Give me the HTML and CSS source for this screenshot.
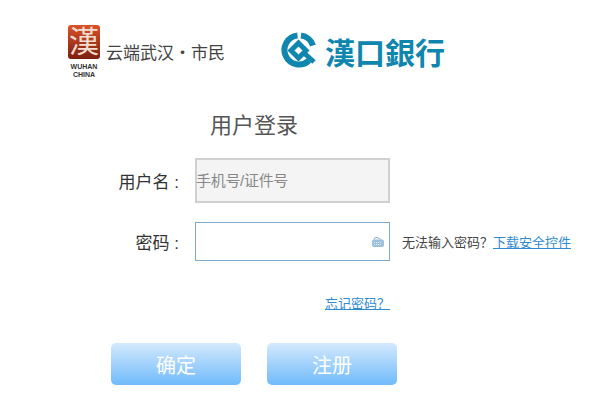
FILE: index.html
```html
<!DOCTYPE html>
<html lang="zh-CN">
<head>
    <meta charset="UTF-8">
    <title>用户登录</title>
    <link rel="stylesheet" href="styles.css">
</head>
<body>
    <header class="header">
        <div class="city-logo">
            <div class="seal-box">
                <div class="seal">漢</div>
                <div class="seal-en">WUHAN<br>CHINA</div>
            </div>
            <div class="city-name">云端武汉・市民</div>
        </div>
        <div class="bank-logo">
            <svg class="bank-icon" width="36" height="36" viewBox="0 0 36 36">
                <path d="M16.5 3.6A14.5 14.5 0 1 0 28 28.5" fill="none" stroke="#0f86ad" stroke-width="6"/>
                <path d="M20 3.6A14.5 14.5 0 0 1 32 13.5" fill="none" stroke="#0f86ad" stroke-width="6"/>
                <path d="M17.5 11L25 18.5L17.5 26L10 18.5Z" fill="none" stroke="#0f86ad" stroke-width="5"/>
                <path d="M23 21L33 30" fill="none" stroke="#0f86ad" stroke-width="5"/>
            </svg>
            <div class="bank-name">漢口銀行</div>
        </div>
    </header>

    <h1 class="title">用户登录</h1>

    <form class="login-form">
        <div class="form-row">
            <label class="form-label">用户名 :</label>
            <div class="input user-input">手机号/证件号</div>
        </div>
        <div class="form-row pwd-row">
            <label class="form-label">密码 :</label>
            <div class="input pwd-input">
                <svg width="14" height="12" viewBox="0 0 14 12">
                    <path d="M3 3.5Q3 1 6 1.5L10 3.5" fill="none" stroke="#8fb4cf" stroke-width="1"/>
                    <rect x="1" y="3.5" width="12" height="7.5" rx="2" fill="#9cc0dc"/>
                    <path d="M3 6.5H11M3 8.5H11" stroke="#e8f2f9" stroke-width="1" stroke-dasharray="1 1"/>
                </svg>
            </div>
            <div class="pwd-help">无法输入密码？<a class="link" href="#">下载安全控件</a></div>
        </div>
        <div class="forgot-row"><a class="link forgot" href="#">忘记密码？</a></div>
        <div class="button-row">
            <button type="button" class="btn">确定</button>
            <button type="button" class="btn">注册</button>
        </div>
    </form>
</body>
</html>
```

FILE: styles.css
```css
body {
    margin: 0;
    background: #fff;
    font-family: "Liberation Sans", "Noto Sans CJK SC", sans-serif;
    color: #444;
}

.header {
    display: flex;
    padding: 25px 0 0 68px;
    height: 74px;
}

.city-logo {
    display: flex;
    width: 213px;
}

.seal-box {
    width: 32px;
}

.seal {
    width: 32px;
    height: 34px;
    overflow: hidden;
    border-radius: 3px;
    background: linear-gradient(#d9532a, #7d2010);
    color: #f3dfd2;
    font-size: 30px;
    line-height: 33px;
    text-align: center;
}

.seal-en {
    margin-top: 4px;
    font-size: 7px;
    font-weight: bold;
    line-height: 8px;
    text-align: center;
    color: #333;
}

.city-name {
    margin: 16px 0 0 6px;
    font-size: 17px;
    line-height: 26px;
    white-space: nowrap;
    color: #444;
}

.bank-logo {
    display: flex;
    align-items: flex-start;
    padding-top: 7px;
}

.bank-name {
    margin: 1px 0 0 8px;
    font-family: "Noto Sans CJK TC", sans-serif;
    font-size: 30px;
    font-weight: bold;
    line-height: 36px;
    color: #0f86ad;
}

.title {
    margin: 0 0 5px 210px;
    font-size: 22px;
    font-weight: normal;
    line-height: 54px;
    color: #555;
}

.form-row {
    display: flex;
    align-items: center;
    height: 45px;
}

.pwd-row {
    height: 39px;
    margin-top: 19px;
}

.form-label {
    width: 179px;
    margin-right: 16px;
    font-size: 17px;
    text-align: right;
    color: #333;
}

.input {
    box-sizing: border-box;
    width: 195px;
    height: 100%;
    font-size: 15px;
}

.user-input {
    display: flex;
    align-items: center;
    padding-bottom: 2px;
    border: 2px solid #d0d0d0;
    background: #f4f4f4;
    color: #888;
    letter-spacing: -0.3px;
    text-indent: -1px;
}

.pwd-input {
    display: flex;
    align-items: center;
    justify-content: flex-end;
    padding-right: 4px;
    border: 1px solid #7fa8cc;
}

.pwd-help {
    margin-left: 12px;
    font-size: 13px;
    white-space: nowrap;
}

.link {
    color: #2f8bd0;
}

.forgot-row {
    width: 390px;
    margin-top: 33px;
    font-size: 13px;
    line-height: 20px;
    text-align: right;
}

.button-row {
    display: flex;
    gap: 26px;
    margin: 29px 0 0 111px;
}

.btn {
    width: 130px;
    height: 42px;
    border: none;
    border-radius: 5px;
    background: linear-gradient(#d4e9fd, #70bafb);
    color: #fff;
    font-family: inherit;
    font-size: 20px;
}
```
